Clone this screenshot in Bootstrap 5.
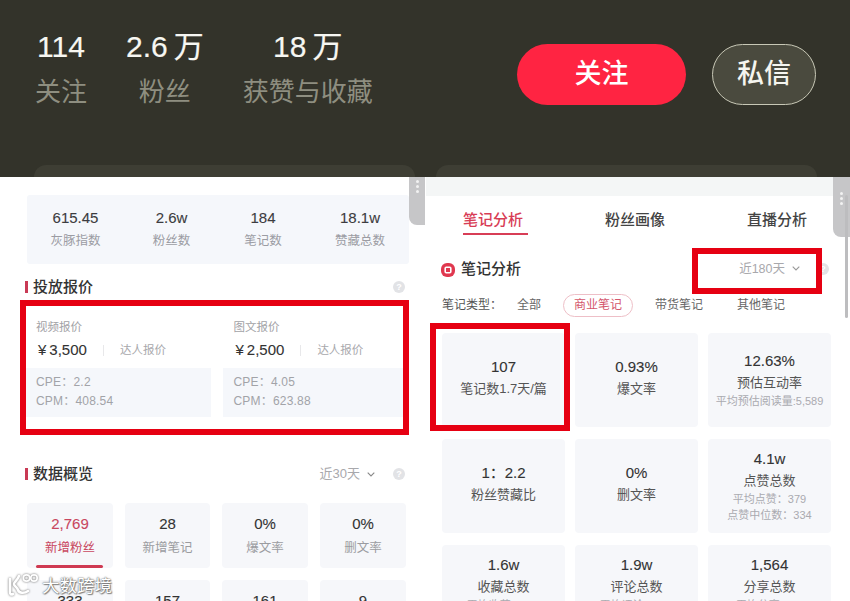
<!DOCTYPE html>
<html lang="zh-CN">
<head>
    <meta charset="UTF-8">
    <meta name="viewport" content="width=device-width, initial-scale=1.0">
    <title>数据概览</title>
    <link href="https://cdn.jsdelivr.net/npm/bootstrap@5.3.3/dist/css/bootstrap.min.css" rel="stylesheet">
    <style>
        html, body { height: 100%; overflow: hidden; background: #fff; }
        body { font-family: "Liberation Sans", "Noto Sans CJK SC", sans-serif; color: #333; }
        .shot { width: 850px; height: 601px; overflow: hidden; position: relative; }

        .hero { height: 177px; background: #33332a; }
        .hero-top { padding: 29px 34px 0 35px; }
        .hero-stats { gap: 39px; }
        .hero-num { font-size: 30px; line-height: 36px; color: #f7f7f2; white-space: nowrap; -webkit-text-stroke: .2px #f7f7f2; }
        .hero-wan { margin-left: 6px; }
        .hero-label { font-size: 26px; line-height: 36px; color: #8e8e80; margin-top: 9px; white-space: nowrap; }
        .btn-follow { width: 169px; height: 61px; margin-top: 15px; border-radius: 31px; background: #ff2442; color: #fff; font-size: 27px; font-weight: 500; border: 0; }
        .btn-msg { width: 104px; height: 61px; margin-top: 15px; margin-left: 26px; border-radius: 31px; background: #4a4a3e; color: #f5f5ef; font-size: 27px; font-weight: 500; border: 1px solid #c8c8b6; }
        .ghost-row { padding-left: 34px; }
        .ghost-top { width: 381px; height: 12px; background: #3e3e34; border-radius: 12px 12px 0 0; }
        .ghost-top + .ghost-top { margin-left: 21px; }

        .pane-l { width: 425px; height: 424px; padding: 18px 16px 0 27px; position: relative; }
        .pane-r { width: 425px; height: 424px; position: relative; border-left: 1px solid #fff; }

        .stat-box { height: 69px; background: #f5f7fb; border-radius: 3px; padding: 12px 0 0; }
        .stat-box > div { text-align: center; }
        .stat-a { width: 97px; }
        .stat-b { width: 95px; }
        .stat-c { width: 88px; }
        .stat-d { width: 102px; padding-left: 4px; }
        .stat-num { font-size: 15px; line-height: 22px; color: #3c3c40; -webkit-text-stroke: .1px #3c3c40; }
        .stat-label { font-size: 12.5px; line-height: 20px; margin-top: 2px; color: #9b9ca3; }

        .sec-head { height: 20px; font-size: 15px; font-weight: 500; color: #333; line-height: 20px; }
        .head-price { margin-top: 13px; }
        .head-data { margin-top: 29px; }
        .sec-bar { width: 3px; height: 12px; background: #c93a55; margin: 0 5px 0 -2px; }
        .help-dot { width: 12px; height: 12px; border-radius: 50%; background: #e2e3e6; color: #fff; font-size: 9px; line-height: 12px; text-align: center; font-weight: 700; }
        .range { font-size: 13px; color: #a8a8ac; line-height: 20px; font-weight: 400; }
        .range-sm { font-size: 12.5px; }
        .chev-l { margin: 0 10px 0 7px; }
        .chev-r { margin: 7px 17px 0 7px; }

        .price-wrap { width: 389px; height: 135px; margin: 3px 0 0 -7px; border: 6px solid #e60012; padding: 5px 0 0 0; gap: 12px; }
        .price-card { width: 186px; }
        .price-card + .price-card { width: 180px; }
        .price-top { height: 57px; padding: 7px 10px 0; }
        .price-title { font-size: 11.5px; line-height: 18px; color: #a2a2a6; }
        .price-line { font-size: 15px; line-height: 20px; margin-top: 4px; padding-left: 2px; color: #333; -webkit-text-stroke: .1px #333; }
        .price-yen { margin-right: 3px; }
        .price-sep { width: 1px; height: 11px; background: #e8e8ea; margin: 0 16px; }
        .price-note { font-size: 11.5px; color: #a8a8ac; -webkit-text-stroke: 0; }
        .price-foot { height: 49px; background: #f5f7fb; padding: 5px 10px 0; font-size: 12px; line-height: 19px; color: #a2a3a8; letter-spacing: .2px; }

        .tile-grid { display: grid; grid-template-columns: 86px 85px 86px 86px; column-gap: 12px; row-gap: 12px; margin-top: 19px; }
        .tile { height: 65px; background: #f6f7fa; border-radius: 4px; text-align: center; padding-top: 10px; position: relative; }
        .tile-num { font-size: 15px; line-height: 22px; color: #333; -webkit-text-stroke: .1px #333; }
        .tile-label { font-size: 12.5px; line-height: 20px; margin-top: 3px; color: #9b9ca0; }
        .tile-on .tile-num { color: #c9475f; -webkit-text-stroke-color: #c9475f; }
        .tile-on .tile-label { color: #c9475f; }
        .tile-line { position: absolute; left: 9px; right: 10px; bottom: 0; height: 3px; border-radius: 2px; background: #cf3a52; }

        .top-strip { height: 19px; background: #f4f6f6; margin-right: 17px; }
        .tab-row { height: 40px; font-size: 15px; font-weight: 500; color: #444; padding: 14px 0 0 37px; }
        .tab-item { line-height: 20px; width: 142px; flex: 0 0 142px; }
        .tab-on { color: #d83d56; }
        .tab-on::after { content: ""; display: block; width: 65px; height: 2px; background: #d83d56; margin-top: 3px; }
        .r-head { padding: 23px 21px 0 15px; height: 56px; }
        .r-icon { width: 14px; height: 14px; margin-right: 6px; }
        .type-row { font-size: 12px; height: 23px; line-height: 23px; color: #555; padding-left: 16px; margin-top: 2px; }
        .type-item { color: #666; }
        .type-name { width: 75px; }
        .type-all { width: 46px; }
        .type-on { width: 70px; text-align: center; border: 1px solid #eebfc7; border-radius: 12px; color: #d4566c; line-height: 21px; }
        .type-goods { margin-left: 22px; width: 82px; }

        .cell-grid { display: grid; grid-template-columns: repeat(3, 123px); column-gap: 10px; row-gap: 12px; padding: 16px 0 0 16px; }
        .cell { height: 94px; background: #f6f7fa; border-radius: 4px; text-align: center; display: flex; flex-direction: column; justify-content: center; }
        .cell-two { padding-bottom: 4px; }
        .cell-num { font-size: 15px; line-height: 20px; color: #333; -webkit-text-stroke: .1px #333; }
        .cell-label { font-size: 13px; line-height: 20px; margin-top: 2px; color: #555; }
        .cell-sub { font-size: 11px; line-height: 16.5px; color: #aaaab0; white-space: nowrap; }
        .cell-top { justify-content: flex-start; padding-top: 10px; }

        .mark-box { position: absolute; border: 6px solid #e60012; }
        .mark-days { left: 266px; top: 71px; width: 130px; height: 46px; }
        .mark-cell { left: 4px; top: 146px; width: 140px; height: 108px; }
        .grip { position: absolute; background: #c6c6c8; border-radius: 0 0 0 8px; }
        .grip i { display: block; width: 3px; height: 3px; background: #f2f2f2; margin: 0 auto 2px; border-radius: 50%; }
        .grip-l { right: 0; top: 0; width: 16px; height: 48px; padding-top: 3px; }
        .grip-r { right: 0; top: 0; width: 17px; height: 60px; padding-top: 15px; }
        .scroll-r { position: absolute; right: 2px; top: 18px; width: 3px; height: 123px; background: #bdbdbf; border-radius: 2px; }

        .wm { position: absolute; left: 8px; top: 573px; color: #fff; font-size: 17.5px; line-height: 24px; text-shadow: 0 0 1px #666, 0 0 2px #777, 1px 1px 1px #888; }
        .wm svg { margin-right: 3px; filter: drop-shadow(0 0 1px #666); }
    </style>
</head>
<body>
    <div class="shot">
        <div class="hero d-flex flex-column justify-content-between">
            <div class="hero-top d-flex justify-content-between align-items-start">
                <div class="hero-stats d-flex text-center">
                    <div><div class="hero-num">114</div><div class="hero-label">关注</div></div>
                    <div><div class="hero-num">2.6<span class="hero-wan">万</span></div><div class="hero-label">粉丝</div></div>
                    <div><div class="hero-num">18<span class="hero-wan">万</span></div><div class="hero-label">获赞与收藏</div></div>
                </div>
                <div class="d-flex">
                    <button type="button" class="btn btn-follow p-0">关注</button>
                    <button type="button" class="btn btn-msg p-0">私信</button>
                </div>
            </div>
            <div class="ghost-row d-flex">
                <div class="ghost-top"></div>
                <div class="ghost-top"></div>
            </div>
        </div>

        <div class="d-flex">
            <div class="pane-l">
                <div class="grip grip-l"><i></i><i></i><i></i></div>
                <div class="stat-box d-flex">
                    <div class="stat-a"><div class="stat-num">615.45</div><div class="stat-label">灰豚指数</div></div>
                    <div class="stat-b"><div class="stat-num">2.6w</div><div class="stat-label">粉丝数</div></div>
                    <div class="stat-c"><div class="stat-num">184</div><div class="stat-label">笔记数</div></div>
                    <div class="stat-d"><div class="stat-num">18.1w</div><div class="stat-label">赞藏总数</div></div>
                </div>

                <div class="sec-head head-price d-flex align-items-center pe-1">
                    <span class="sec-bar"></span>投放报价
                    <span class="help-dot ms-auto">?</span>
                </div>

                <div class="price-wrap d-flex">
                    <div class="price-card">
                        <div class="price-top">
                            <div class="price-title">视频报价</div>
                            <div class="price-line d-flex align-items-center"><span class="price-yen">¥</span>3,500<span class="price-sep"></span><span class="price-note">达人报价</span></div>
                        </div>
                        <div class="price-foot">CPE：2.2<br>CPM：408.54</div>
                    </div>
                    <div class="price-card">
                        <div class="price-top">
                            <div class="price-title">图文报价</div>
                            <div class="price-line d-flex align-items-center"><span class="price-yen">¥</span>2,500<span class="price-sep"></span><span class="price-note">达人报价</span></div>
                        </div>
                        <div class="price-foot">CPE：4.05<br>CPM：623.88</div>
                    </div>
                </div>

                <div class="sec-head head-data d-flex align-items-center pe-1">
                    <span class="sec-bar"></span>数据概览
                    <span class="range ms-auto">近30天</span>
                    <svg class="chev-l" width="8" height="5" viewBox="0 0 8 5"><path d="M.7.7L4 4l3.3-3.3" fill="none" stroke="#888" stroke-width="1.1"/></svg>
                    <span class="help-dot ms-2">?</span>
                </div>

                <div class="tile-grid">
                    <div class="tile tile-on"><div class="tile-num">2,769</div><div class="tile-label">新增粉丝</div><span class="tile-line"></span></div>
                    <div class="tile"><div class="tile-num">28</div><div class="tile-label">新增笔记</div></div>
                    <div class="tile"><div class="tile-num">0%</div><div class="tile-label">爆文率</div></div>
                    <div class="tile"><div class="tile-num">0%</div><div class="tile-label">删文率</div></div>
                    <div class="tile"><div class="tile-num">333</div></div>
                    <div class="tile"><div class="tile-num">157</div></div>
                    <div class="tile"><div class="tile-num">161</div></div>
                    <div class="tile"><div class="tile-num">9</div></div>
                </div>
            </div>

            <div class="pane-r">
                <div class="top-strip"></div>
                <div class="tab-row d-flex">
                    <div class="tab-item tab-on">笔记分析</div>
                    <div class="tab-item">粉丝画像</div>
                    <div class="tab-item">直播分析</div>
                </div>
                <div class="r-head d-flex align-items-start">
                    <svg class="r-icon mt-1" viewBox="0 0 14 14"><rect width="14" height="14" rx="6" fill="#e0384f"/><rect x="4.2" y="4.2" width="5.6" height="5.6" rx="1" fill="none" stroke="#fff" stroke-width="1.6"/></svg>
                    <span class="sec-head">笔记分析</span>
                    <span class="range range-sm ms-auto">近180天</span>
                    <svg class="chev-r" width="8" height="5" viewBox="0 0 8 5"><path d="M.7.7L4 4l3.3-3.3" fill="none" stroke="#999" stroke-width="1.1"/></svg>
                    <span class="help-dot mt-1">?</span>
                </div>
                <div class="type-row d-flex">
                    <span class="type-name">笔记类型：</span>
                    <span class="type-item type-all">全部</span>
                    <span class="type-item type-on">商业笔记</span>
                    <span class="type-item type-goods">带货笔记</span>
                    <span class="type-item">其他笔记</span>
                </div>
                <div class="cell-grid">
                    <div class="cell cell-two"><div class="cell-num">107</div><div class="cell-label">笔记数1.7天/篇</div></div>
                    <div class="cell cell-two"><div class="cell-num">0.93%</div><div class="cell-label">爆文率</div></div>
                    <div class="cell"><div class="cell-num">12.63%</div><div class="cell-label">预估互动率</div><div class="cell-sub">平均预估阅读量:5,589</div></div>
                    <div class="cell cell-two"><div class="cell-num">1：2.2</div><div class="cell-label">粉丝赞藏比</div></div>
                    <div class="cell cell-two"><div class="cell-num">0%</div><div class="cell-label">删文率</div></div>
                    <div class="cell"><div class="cell-num">4.1w</div><div class="cell-label">点赞总数</div><div class="cell-sub">平均点赞：379</div><div class="cell-sub">点赞中位数：334</div></div>
                    <div class="cell cell-top"><div class="cell-num">1.6w</div><div class="cell-label">收藏总数</div><div class="cell-sub">平均收藏：146</div></div>
                    <div class="cell cell-top"><div class="cell-num">1.9w</div><div class="cell-label">评论总数</div><div class="cell-sub">平均评论：176</div></div>
                    <div class="cell cell-top"><div class="cell-num">1,564</div><div class="cell-label">分享总数</div><div class="cell-sub">平均分享：14</div></div>
                </div>
                <div class="mark-box mark-days"></div>
                <div class="mark-box mark-cell"></div>
                <div class="grip grip-r"><i></i><i></i><i></i></div>
                <div class="scroll-r"></div>
            </div>
        </div>

        <div class="wm d-flex align-items-center">
            <svg width="31" height="25" viewBox="0 0 31 25" fill="none" stroke="#fff" stroke-width="2.6" stroke-linecap="round">
                <path d="M2 6v13c0 2 1 3 3 2"/>
                <path d="M11 3C9 8 6 9 6 11c0 2 3 3 4 6 1 3 6 4 10 1"/>
                <circle cx="18.5" cy="5" r="3.2" stroke-width="1.7"/>
                <circle cx="26" cy="5" r="3.2" stroke-width="1.7"/>
            </svg>
            大数跨境
        </div>
    </div>

    <script src="https://cdn.jsdelivr.net/npm/bootstrap@5.3.3/dist/js/bootstrap.bundle.min.js"></script>
</body>
</html>
